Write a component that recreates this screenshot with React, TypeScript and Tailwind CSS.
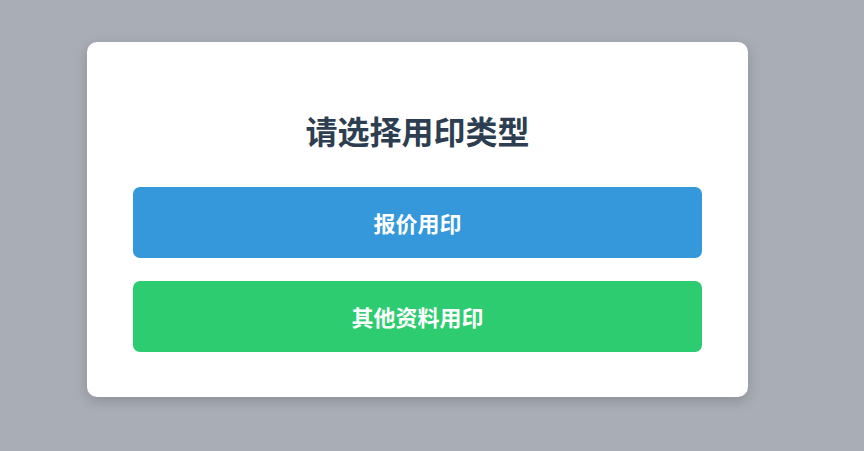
import React from 'react';

const App = () => {
  return (
    <div
      className="min-h-[451px] w-full bg-[#a9aeb6] pl-[87px] pt-[42px]"
      style={{ fontFamily: '"Noto Sans CJK SC", "Noto Sans", sans-serif' }}
    >
      <div className="w-[661px] rounded-[10px] bg-white px-[46px] pb-[45px] pt-[45px] shadow-[0_4px_14px_rgba(0,0,0,0.18)]">
        {/* 标题 */}
        <h1 className="mt-[19px] mb-[33px] text-center text-[32px] font-bold leading-[48px] text-[#2c3e50]">
          请选择用印类型
        </h1>

        {/* 按钮 */}
        <div className="flex flex-col gap-[23px]">
          <button className="h-[71px] w-full rounded-[7px] bg-[#3498db] text-[22px] font-bold text-white">
            报价用印
          </button>
          <button className="h-[71px] w-full rounded-[7px] bg-[#2ecc71] text-[22px] font-bold text-white">
            其他资料用印
          </button>
        </div>
      </div>
    </div>
  );
};

export default App;
